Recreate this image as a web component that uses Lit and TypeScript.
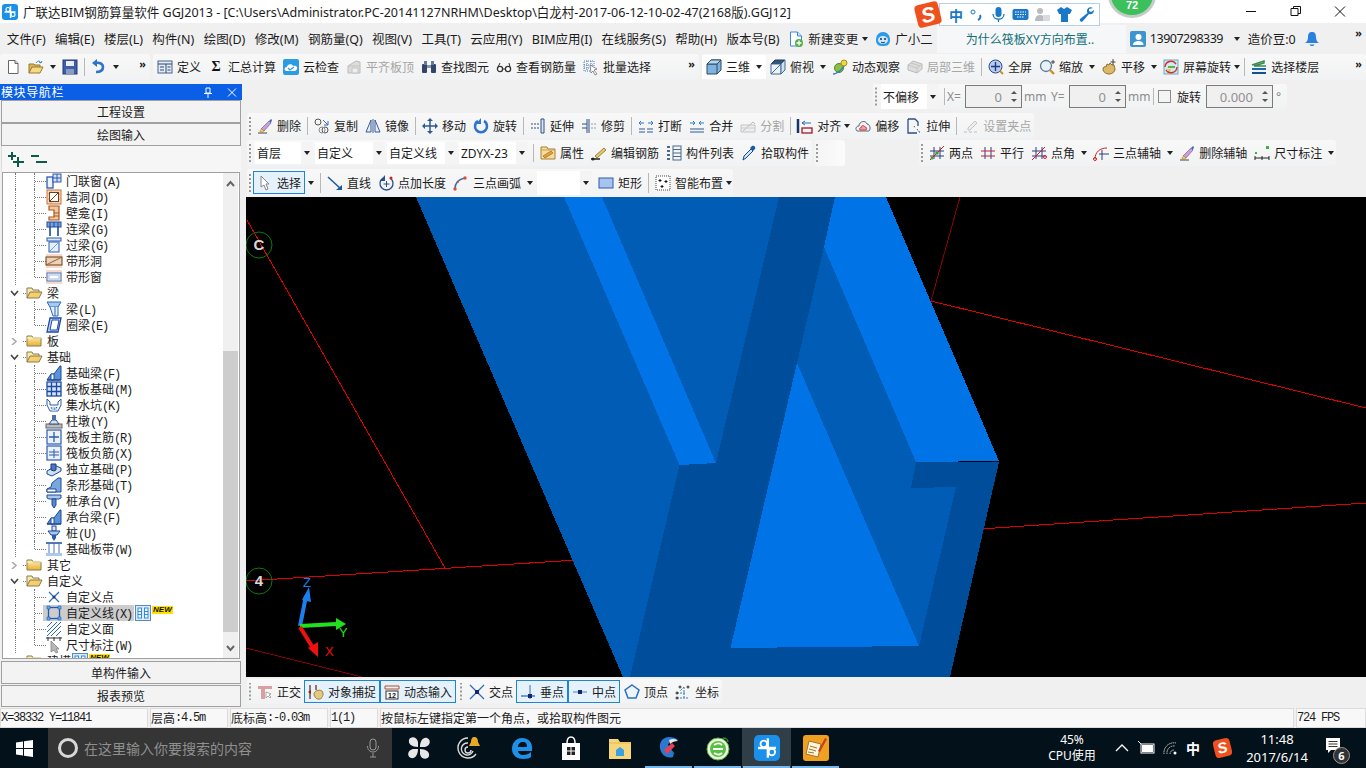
import { LitElement, html, css, svg, TemplateResult } from "lit";
import { customElement } from "lit/decorators.js";

const brush = svg`<path d="M1 15h9" stroke="#444"/><path d="M4 11l8-8 2 2-7 8z" fill="#c9a0d8" stroke="#6a4a8a" stroke-width=".6"/><path d="M3 14c0-2 1-3 2-3l2 2c-1 1-2 1-4 1z" fill="#f2d060" stroke="#a07020" stroke-width=".5"/><path d="M12 3l2-2 1 1-1 3z" fill="#3a6fb8"/>`;
const hash = svg`<path d="M5 2v12M11 2v12M1 6h14M1 11h14" stroke="#2c3f80" fill="none"/>`;
const wall = svg`<rect x="1" y="1" width="14" height="14" fill="#f6d7bd" stroke="#c8703a"/><path d="M1 5h14M1 10h14M5 1v4M11 5v5M5 10v5" stroke="#e8a070" fill="none"/>`;

const ICONS: Record<string, TemplateResult> = {
  new: svg`<path d="M3.500 1.500h6.500l3 3v10h-9.500z" fill="#fff" stroke="#666"/><path d="M10 1.500v3h3" fill="#ddd" stroke="#666"/>`,
  open: svg`<path d="M1 14V5h5l1 1h5v2" fill="#d9b45a" stroke="#9a7a2a"/><path d="M1 14l3-6h11l-3 6z" fill="#f6d887" stroke="#9a7a2a"/><path d="M8 4c2-3 4-2 5 0M13 4l1-2M13 4l-2-1" fill="none" stroke="#3a7fc8"/>`,
  save: svg`<rect x="1" y="1" width="14" height="14" fill="#3d5ea8" stroke="#223a78"/><rect x="4" y="2" width="8" height="5" fill="#e8eef8"/><rect x="4" y="10" width="8" height="5" fill="#8a9ac0"/>`,
  undo: svg`<path d="M5 13c5 0 7-2 7-5s-3-5-8-4" fill="none" stroke="#2f74cc" stroke-width="2.600"/><path d="M6 0v8L1 4z" fill="#2f74cc"/>`,
  define: svg`<rect x="1" y="2" width="14" height="12" fill="#e4ecf6" stroke="#44648c"/><path d="M1 5h14M9 5v9M3 8h4M3 11h4M10.500 8h3M10.500 11h3" stroke="#2c4a70" fill="none"/>`,
  cloud: svg`<rect x="0" y="0" width="16" height="16" rx="2" fill="#2c9be4"/><path d="M3 12c-2-1-2-4 1-4 0-3 5-4 6-1 3-1 5 1 4 3-1 2-2 2-3 2z" fill="#fff"/><path d="M5 9l2 2 4-3" fill="none" stroke="#2c9be4" stroke-width="1.300"/>`,
  flat: svg`<path d="M2 7l8-5 4 1v11H2z" fill="#ddd" stroke="#bbb"/><path d="M2 7h12M6 9h6v5H6z" fill="#eee" stroke="#c4c4c4"/>`,
  find: svg`<rect x="1" y="5" width="5" height="9" rx="1" fill="#33466a"/><rect x="10" y="5" width="5" height="9" rx="1" fill="#33466a"/><rect x="3" y="2" width="3" height="4" fill="#6a7a9a"/><rect x="10" y="2" width="3" height="4" fill="#6a7a9a"/><rect x="6" y="6" width="4" height="3" fill="#8898b4"/>`,
  glasses: svg`<circle cx="4" cy="10" r="2.600" fill="#fff" stroke="#333" stroke-width="1.300"/><circle cx="12" cy="10" r="2.600" fill="#fff" stroke="#333" stroke-width="1.300"/><path d="M6.500 10h3M2 8l2-4M14 8l-1-4" stroke="#333" fill="none"/>`,
  batch: svg`<path d="M1 2h10v10H1zM1 6h10M1 9h10M4 2v10M8 2v10" fill="none" stroke="#4a78b8" stroke-dasharray="1 1"/><path d="M7 6l7 4-3 1 3 4-2 1-2-4-2 2z" fill="#fff" stroke="#666" stroke-width=".7"/>`,
  cube: svg`<path d="M1 5l4-4h10v10l-4 4H1z" fill="#7fb2dc" stroke="#2a4a6a"/><path d="M1 5h10v10M11 5l4-4" fill="none" stroke="#2a4a6a"/><path d="M1 5l4-4h10l-4 4z" fill="#b8d6ee" stroke="#2a4a6a"/>`,
  top: svg`<path d="M1 5l4-4h10l-4 4z" fill="#30557e" stroke="#223a58"/><path d="M1 5h10v10H1z" fill="#eaf2fa" stroke="#44688e"/><path d="M11 5l4-4v10l-4 4zM1 15l10-10" fill="#cfe0f0" stroke="#44688e"/>`,
  orbit: svg`<circle cx="7" cy="9" r="4.500" fill="#8ac040" stroke="#4a8a20"/><path d="M1 15c4 0 10-5 13-11" fill="none" stroke="#3a7ac8" stroke-width="1.400"/><circle cx="12" cy="4" r="3" fill="#f0d840" stroke="#a89020"/>`,
  local3d: svg`<path d="M1 6l5-4 9 3v5l-5 4-9-3z" fill="#ddd" stroke="#bbb"/><path d="M1 6l9 3 5-4M10 9v5M4 4l9 3" fill="none" stroke="#c4c4c4"/>`,
  full: svg`<circle cx="7.500" cy="7.500" r="6.500" fill="#b8cdec" stroke="#2c4a88"/><path d="M7.500 3v9M3 7.500h9" stroke="#1c3a88" stroke-width="1.400"/><path d="M12 12l3 3" stroke="#c89030" stroke-width="2"/>`,
  zoom: svg`<circle cx="7" cy="7" r="5.500" fill="#e8f0f8" stroke="#5a7a9a" stroke-width="1.300"/><path d="M11 11l4 4" stroke="#c89030" stroke-width="2.400"/><path d="M14 1v4M12 3h4" stroke="#444"/>`,
  pan: svg`<path d="M2 10c0-2 2-3 3-2l1-3 2 1 1-2 2 2 2 0 1 4c0 3-3 5-6 5-3 0-6-2-6-5z" fill="#dcb868" stroke="#90702a"/><path d="M12 0v6M9.500 3h5" stroke="#444"/>`,
  spin: svg`<rect x="1" y="1" width="14" height="14" fill="#cfe8f6" stroke="#6aa8d0"/><path d="M2 8a6 6 0 0 1 11-3M14 8a6 6 0 0 1-11 3" fill="none" stroke="#d83020" stroke-width="1.400"/><rect x="5" y="7" width="7" height="2" fill="#68b040"/><rect x="4" y="10" width="4" height="2" fill="#f0c840"/>`,
  floors: svg`<path d="M1 6l12-4v2L3 7h12" fill="none" stroke="#3a8a50" stroke-width="1.500"/><path d="M1 10h14" stroke="#1a6ab0" stroke-width="2"/><path d="M1 14h14" stroke="#14508a" stroke-width="2"/>`,
  change: svg`<path d="M2.500 1h7l4 4v10h-11z" fill="#fff" stroke="#3a8adc"/><path d="M9.500 1v4h4" fill="#cfe4f8" stroke="#3a8adc"/><circle cx="11" cy="12" r="4" fill="#50b040"/><path d="M11 9.500v5M8.500 12h5" stroke="#fff" stroke-width="1.400"/>`,
  xiaoer: svg`<path d="M1 9c0-5 3-8 7-8s7 3 7 8-3 6-7 6-7-1-7-6z" fill="#2c9ae8"/><ellipse cx="8" cy="9" rx="5" ry="4" fill="#cdeafa"/><circle cx="6" cy="8" r="1" fill="#134"/><circle cx="10" cy="8" r="1" fill="#134"/><path d="M6 11c1 1 3 1 4 0" stroke="#134" fill="none"/>`,
  avatar: svg`<rect width="16" height="16" rx="2" fill="#3c95d0"/><circle cx="8.500" cy="6" r="3" fill="#fff"/><path d="M3 14c0-3 3-4 5.500-4s5 1 5 4z" fill="#fff"/>`,
  bell: svg`<path d="M8 1c3 0 4 2 4 5s1 5 3 6H1c2-1 3-3 3-6s1-5 4-5z" fill="#2a80e0"/><path d="M5.500 13.500c1 2 4 2 5 0z" fill="#2a80e0"/>`,
  del: brush,
  copy: svg`<circle cx="4" cy="4" r="3" fill="none" stroke="#555"/><circle cx="11" cy="12" r="3" fill="none" stroke="#555"/><circle cx="8" cy="12" r="3" fill="none" stroke="#888"/><path d="M9 2l5 5M14 3v4h-4" fill="none" stroke="#3a6ab0"/>`,
  mirror: svg`<path d="M6 2v12H1zM10 2v12h5z" fill="#e4eefa" stroke="#3a5a98"/><path d="M8 1v14" stroke="#3a5a98"/>`,
  move: svg`<path d="M8 1v14M1 8h14" stroke="#2c5a94" stroke-width="1.500"/><path d="M8 0l3 3H5zM8 16l3-3H5zM0 8l3-3v6zM16 8l-3-3v6z" fill="#2c5a94"/>`,
  rotate: svg`<path d="M5 3a6 6 0 1 0 6 0" fill="none" stroke="#2f74cc" stroke-width="2.600"/><path d="M8 0v6H3z" fill="#2f74cc"/>`,
  extend: svg`<path d="M1 6h8M1 10h8" stroke="#2c4f8a" stroke-dasharray="2 1"/><path d="M11 1h3v14h-3z" fill="#dbe6f3" stroke="#2c4f8a"/>`,
  trim: svg`<path d="M1 6h5M1 10h5" stroke="#2c4f8a"/><path d="M6 1v14M8 1v14" stroke="#2c4f8a"/><path d="M10 6h5M10 10h5" stroke="#8aa0c0" stroke-dasharray="2 1"/>`,
  brk: svg`<path d="M1 11h6M9 11h6M1 14h6M9 14h6" stroke="#2c5a94"/><path d="M6 5H1M1 5l2-2M1 5l2 2M10 5h5M15 5l-2-2M15 5l-2 2" fill="none" stroke="#2c7ac4"/>`,
  merge: svg`<path d="M1 11h14M1 14h14" stroke="#2c5a94"/><path d="M1 5h5M6 5L4 3M6 5L4 7M15 5h-5M10 5l2-2M10 5l2 2" fill="none" stroke="#2c7ac4"/>`,
  split: svg`<path d="M1 14V7h14v7z" fill="#eee" stroke="#c4c4c4"/><path d="M3 13l10-9 2 2" fill="none" stroke="#bbb"/><path d="M1 10h14" stroke="#ccc"/>`,
  align: svg`<path d="M1 1v14" stroke="#14346a" stroke-width="2.500"/><rect x="5" y="10" width="10" height="5" fill="none" stroke="#a01828" stroke-width="1.300"/><path d="M5 5h9M5 5l3-2M5 5l3 2" fill="none" stroke="#2a6ac0"/>`,
  offset: svg`<path d="M2 13c-2-2-1-5 2-5 0-5 7-6 8-2 3 0 4 5 2 7z" fill="#f4f4f4" stroke="#4a6a8a"/><path d="M5 12c-1-1 0-3 1-2 0-3 3-3 4-1 2 0 2 2 1 3z" fill="#f0a0a0" stroke="#d84040"/>`,
  stretch: svg`<path d="M2 1h7l3 3v4M2 1v14h9" fill="none" stroke="#2c4f8a" stroke-width="1.300"/><path d="M8 8l1 2M11 11l2 3M13 14h2" stroke="#444" stroke-dasharray="1 1"/>`,
  grip: svg`<path d="M1 14h3M6 14h3M11 14h3" stroke="#bbb"/><path d="M5 10l7-7 2 2-7 7H5z" fill="#eee" stroke="#c4c4c4"/>`,
  attr: svg`<path d="M1 14V2h6l1 2h7v10z" fill="#f6dca0" stroke="#a88030"/><path d="M3 11l8-5 2 2-8 5z" fill="#e8a030" stroke="#8a6020" stroke-width=".6"/><path d="M1 5h14" stroke="#c8a050"/>`,
  edit: svg`<path d="M0 14h9" stroke="#222" stroke-width="1.500"/><path d="M4 11l9-8 2 2-9 8z" fill="#e8c860" stroke="#7a5a20" stroke-width=".7"/><circle cx="2" cy="14" r="1.500" fill="#222"/>`,
  list: svg`<path d="M1 2h3M1 6h3M1 10h3M1 14h3" stroke="#4a6a8a" stroke-width="2"/><rect x="7" y="1" width="8" height="14" fill="#f0f4f8" stroke="#4a6a8a"/><path d="M7 4.500h8M7 8h8M7 11.500h8" stroke="#4a6a8a"/>`,
  pick: svg`<path d="M2 15l1-4 7-7 2 2-7 7z" fill="#cfe4f8" stroke="#1c4a88"/><path d="M9 3l2-2c2-1 4 1 3 3l-2 2z" fill="#1c5aa8"/>`,
  twopt: svg`${hash}<path d="M1 15L15 1" stroke="#d02020"/><circle cx="8" cy="8" r="1.800" fill="#4a9a30"/><circle cx="3" cy="13" r="1.500" fill="#4a9a30"/>`,
  para: svg`<path d="M5 2v12M11 2v12" stroke="#2c3f80"/><path d="M1 6h14M1 11h14" stroke="#c02030"/>`,
  angle: svg`${hash}<path d="M1 15L14 2" stroke="#d02020"/><circle cx="14" cy="12" r="1.500" fill="none" stroke="#d02020"/>`,
  arc3: svg`<path d="M2 14c0-7 5-11 12-11" fill="none" stroke="#d02020"/><circle cx="2" cy="14" r="1.500" fill="none" stroke="#d02020"/><path d="M9 5v10M6 9h10" stroke="#2c3f80"/>`,
  dim: svg`<rect x="12" y="1" width="3" height="3" fill="#40b040"/><rect x="1" y="7" width="2" height="2" fill="#40b040"/><path d="M1 13h14M1 11v4M8 11v4M15 11v4" stroke="#222"/>`,
  cursor: svg`<path d="M4 1v11l3-2 2 5 2-1-2-5h3z" fill="#fff" stroke="#888"/>`,
  line: svg`<path d="M1 2l13 12" stroke="#1c5a9c" stroke-width="1.500"/><path d="M15 15H9l6-5z" fill="#1c5a9c"/>`,
  pluslen: svg`<path d="M5 3a6.500 6.500 0 1 0 7 0" fill="none" stroke="#2c4f8a" stroke-width="1.300"/><path d="M8.500 6v6M5.500 9h6" stroke="#2c4f8a"/><path d="M7 0v6H2z" fill="#2c4f8a"/><circle cx="13" cy="3" r="1.500" fill="#d02020"/>`,
  arc: svg`<path d="M2 14c0-6 4-10 10-11" fill="none" stroke="#3a6ab0" stroke-width="1.500"/><circle cx="2" cy="14" r="1.700" fill="#d85040"/><circle cx="12" cy="3" r="1.700" fill="#d85040"/><circle cx="5" cy="7" r="1" fill="#d85040"/>`,
  rect: svg`<rect x="1" y="3" width="14" height="10" fill="#a8c4ee" stroke="#2c5aa8"/>`,
  smart: svg`<rect x="1" y="1" width="14" height="14" fill="#fff" stroke="#444" stroke-dasharray="1 1"/><path d="M5 4v3M3.500 5.500h3M11 5v3M9.500 6.500h3M7 10v3M5.500 11.500h3" stroke="#111"/>`,
  ortho: svg`<path d="M1 2h14v3H8v10H4V5H1z" fill="#d8a0a0"/><path d="M9 8v6l2-2 2 2 1-1-2-2 2-1z" fill="#fff" stroke="#777" stroke-width=".6"/>`,
  snap: svg`<path d="M2 1v14M8 1v5" stroke="#6a3020" stroke-width="1.300"/><path d="M0 8l3-2v4zM8 8l3-2v4z" fill="#8a2020"/><path d="M6 10c0-3 5-5 8-3 2 2 1 7-2 8-3 1-6-2-6-5z" fill="#e4c880" stroke="#a08040"/>`,
  dyn: svg`<path d="M1 2h14M1 5h14M1 2v3M15 2v3" stroke="#b05030" fill="none"/><rect x="2" y="7" width="12" height="8" fill="#fff" stroke="#333"/><text x="8" y="14" text-anchor="middle" font-size="7" font-weight="700" fill="#111" font-family="Liberation Sans">12</text>`,
  cross: svg`<path d="M1 1l14 14M15 1L1 15" stroke="#2c6fc0" stroke-width="1.300"/><rect x="6" y="6" width="4" height="4" fill="#14286a"/>`,
  perp: svg`<path d="M1 12h14" stroke="#2c6fc0" stroke-width="1.300"/><path d="M10 1v14" stroke="#2c6fc0"/><rect x="8" y="10" width="4" height="4" fill="#14286a"/>`,
  mid: svg`<path d="M1 8h14" stroke="#7ba4d8" stroke-width="1.500"/><rect x="6" y="6" width="4" height="4" fill="#14286a"/>`,
  vertex: svg`<path d="M8 1l7 5-3 8H4L1 6z" fill="#eef4fc" stroke="#2c6fc0" stroke-width="1.500"/>`,
  coord: svg`<path d="M2 14h12M9 14V3M2 9h9M9 3L5 7" stroke="#3a7ac0" stroke-dasharray="2 1" fill="none"/><circle cx="2" cy="14" r="1" fill="none" stroke="#222"/><circle cx="13" cy="3" r="1" fill="none" stroke="#222"/><circle cx="5" cy="3" r="1" fill="none" stroke="#222"/><circle cx="2" cy="9" r="1" fill="none" stroke="#222"/>`,
  folder: svg`<path d="M1 13V3h5l1 2h8v8z" fill="url(#fg)" stroke="#8a7a50"/><path d="M1 5h14" stroke="#fff3c0"/>`,
  folderOpen: svg`<path d="M1 13V3h5l1 2h6v2" fill="#fbe9b0" stroke="#8a7a50"/><path d="M1 13l3-6h12l-3 6z" fill="#f6cf6c" stroke="#8a7a50"/>`,
  door: svg`<rect x="1" y="4" width="6" height="11" fill="#eaf2fb" stroke="#2c5ab0" stroke-width="1.300"/><rect x="7" y="1" width="8" height="8" fill="#d2e2f6" stroke="#2c5ab0"/><path d="M11 1v8M7 5h8" stroke="#2c5ab0"/>`,
  hole: svg`${wall}<rect x="3.500" y="3.500" width="9" height="9" fill="#fff" stroke="#6a4020"/><path d="M4 12l8-8" stroke="#6a4020"/>`,
  niche: svg`<path d="M3 1h10v14H3v-3h5V5H3z" fill="#f3c8a0" stroke="#a85a20" stroke-width="1.200"/><path d="M8 8h5M8 11h5" stroke="#a85a20"/>`,
  linkb: svg`<rect x="1" y="1" width="14" height="5" fill="#7aa0dc" stroke="#1c4aa0"/><path d="M4 6v9M12 6v9" stroke="#1c4aa0" stroke-width="1.600"/><path d="M4 1v5M8 1v5M12 1v5" stroke="#1c4aa0"/>`,
  lintel: svg`<rect x="1" y="1" width="14" height="3" fill="#dbe8f8" stroke="#2c5ab0"/><rect x="3" y="5" width="10" height="10" fill="#e4eefa" stroke="#2c5ab0"/><path d="M4 14l8-8" stroke="#7aa0dc"/>`,
  bandh: svg`<rect x="0" y="1" width="16" height="14" fill="#f8d8c8"/><rect x="0" y="4" width="16" height="8" fill="#e8d4b8" stroke="#6a3a14"/><path d="M0 12L16 4" stroke="#a85a20"/>`,
  bandw: svg`<rect x="0" y="1" width="16" height="14" fill="#f8d8c8"/><rect x="1" y="4" width="14" height="8" fill="#e8f0fb" stroke="#4a78c0"/><rect x="3" y="6" width="10" height="4" fill="#fff" stroke="#a8c0e4"/>`,
  beam: svg`<path d="M1 1h14l-3 5H4z" fill="#a8ccf0" stroke="#2c6ab8"/><path d="M4 6l3 9h5V6" fill="#e4f0fb" stroke="#2c6ab8"/><path d="M9 6v9" stroke="#2c6ab8"/>`,
  ring: svg`<path d="M4 1h11l-3 14H1z" fill="#c4d8f4" stroke="#1c4aa8" stroke-width="1.300"/><path d="M6 3h7l-2 10H4z" fill="#fff" stroke="#1c4aa8"/>`,
  fbeam: svg`<path d="M1 15l4-6h3l6-8h1v14z" fill="#5a92d8" stroke="#1c4a98"/><path d="M5 15V9h3v6z" fill="#fff" stroke="#1c4a98"/><path d="M1 15h14" stroke="#1c4a98" stroke-width="1.300"/>`,
  raft: svg`<rect x="1" y="1" width="14" height="14" fill="#d4e2f6" stroke="#1c4aa0" stroke-width="1.300"/><path d="M5.500 1v14M10.500 1v14M1 5.500h14M1 10.500h14" stroke="#1c4aa0" stroke-width="1.300"/>`,
  sump: svg`<path d="M1 2l3 3v3h8V5l3-3v6l-3 6H4L1 8z" fill="#fff" stroke="#2c5ab0"/><path d="M4 10h8l-2 4H6z" fill="#b8d0ee"/><path d="M5 11h1M8 12h1M10 10.500h1" stroke="#2c5ab0"/>`,
  pier: svg`<rect x="0" y="11" width="16" height="4" fill="#bcbcbc" stroke="#666"/><path d="M3 11l3-4h4l3 4z" fill="#dce6f2" stroke="#2c4a88"/><rect x="6" y="2" width="4" height="5" fill="#4a72b0"/>`,
  rmain: svg`<rect x="1" y="1" width="14" height="14" fill="#eaf2fb" stroke="#2c5ab0" stroke-width="1.200"/><path d="M8 3v10M3 8h10" stroke="#2c5ab0" stroke-width="1.300"/>`,
  rneg: svg`<rect x="1" y="1" width="14" height="14" fill="#eaf2fb" stroke="#2c5ab0" stroke-width="1.200"/><path d="M3 7h10M3 10h10M8 4v9" stroke="#2c5ab0"/>`,
  iso: svg`<path d="M1 10l9-5 5 2v3l-9 5-5-2z" fill="#cfe0f4" stroke="#1c4a98"/><path d="M5 3h5v6l-2 1-3-1z" fill="#4a78c0" stroke="#1c3a78"/>`,
  strip: svg`<path d="M1 15v-3l4-2 1-4 6-5h3v14z" fill="#7aa8de" stroke="#1c4a98"/><path d="M1 12h9v3H1z" fill="#fff" stroke="#1c4a98"/>`,
  cap: svg`<path d="M1 2h14v3l-2 1H3L1 5z" fill="#a8c8ee" stroke="#1c4a98"/><path d="M6 6h4v6l-2 3-2-3z" fill="#5a88c8" stroke="#1c4a98"/>`,
  pile: svg`<rect x="6" y="1" width="4" height="5" fill="#dce8f8" stroke="#1c4a98"/><path d="M2 6h12l-3 4H5z" fill="#a8c8ee" stroke="#1c4a98"/><path d="M6 10h4v3l-2 3-2-3z" fill="#2c5ab0"/>`,
  fband: svg`<path d="M0 2h16M0 14h16" stroke="#1c4a98" stroke-width="1.600"/><path d="M3 2v12M8 2v12M13 2v12" stroke="#4a78c0"/><rect x="0" y="12" width="16" height="3" fill="#a8c8ee"/>`,
  xpt: svg`<path d="M3 3l10 10M13 3L3 13" stroke="#2c6ab8" stroke-width="1.200"/><circle cx="8" cy="8" r="1.500" fill="#1c3a78"/>`,
  lbox: svg`<rect x="2.500" y="2.500" width="11" height="11" fill="none" stroke="#1c5ab8" stroke-width="1.300"/><path d="M1 1h3v3H1zM12 1h3v3h-3zM1 12h3v3H1zM12 12h3v3h-3z" fill="#6aa8ec" stroke="#1c5ab8" stroke-width=".6"/>`,
  hatch: svg`<path d="M1 6l5-5M1 11L11 1M1 15L15 1M5 15L15 5M10 15l5-5" stroke="#2c6ab8"/>`,
  dimc: svg`<path d="M0 1h16M2 0v4M14 0v4M8 0v4" stroke="#333"/><path d="M5 4v11l3-2 2 3 2-1-2-3h3z" fill="#b8b8b8" stroke="#777" stroke-width=".7"/>`,
  bars: svg`<rect x="0.500" y="0.500" width="15" height="15" fill="#dcecfc" stroke="#5a88b8"/><rect x="3" y="3" width="3.500" height="10" fill="#fff" stroke="#2c8ae0"/><rect x="9.500" y="3" width="3.500" height="10" fill="#fff" stroke="#2c8ae0"/><path d="M3 6.500h3.500M3 9.500h3.500M9.500 6.500H13M9.500 9.500H13" stroke="#2c8ae0"/>`,
  app: svg`<rect width="16" height="16" rx="3" fill="#1a90ea"/><path d="M8.500 2v12M2.500 8h11" stroke="#fff" stroke-width="1.400"/><circle cx="6" cy="5.500" r="2" fill="none" stroke="#fff" stroke-width="1.100"/><circle cx="11" cy="10.500" r="2" fill="none" stroke="#fff" stroke-width="1.100"/>`,
};

type Item = { i?: string; t?: string; a?: boolean; tight?: boolean; dis?: boolean; on?: boolean; wh?: boolean; sep?: boolean; grip?: boolean; combo?: number; sym?: string };

const S: Item = { sep: true };
const G: Item = { grip: true };

const ROW_A: Item[] = [{ i: "new" }, { i: "open", a: true }, { i: "save" }, S, { i: "undo", a: true }];
const ROW_B: Item[] = [
  { i: "define", t: "定义" }, { sym: "Σ", t: "汇总计算" }, { i: "cloud", t: "云检查" }, { i: "flat", t: "平齐板顶", dis: true },
  { i: "find", t: "查找图元" }, { i: "glasses", t: "查看钢筋量" }, { i: "batch", t: "批量选择" },
];
const ROW_C: Item[] = [
  { i: "cube", t: "三维", a: true, wh: true }, { i: "top", t: "俯视", a: true }, { i: "orbit", t: "动态观察" }, { i: "local3d", t: "局部三维", dis: true }, S,
  { i: "full", t: "全屏" }, { i: "zoom", t: "缩放", a: true }, { i: "pan", t: "平移", a: true }, { i: "spin", t: "屏幕旋转", a: true, tight: true }, S, { i: "floors", t: "选择楼层" },
];
const ROW_EDIT: Item[] = [
  G, { i: "del", t: "删除" }, S, { i: "copy", t: "复制" }, { i: "mirror", t: "镜像" }, S, { i: "move", t: "移动" }, { i: "rotate", t: "旋转" }, S,
  { i: "extend", t: "延伸" }, { i: "trim", t: "修剪" }, S, { i: "brk", t: "打断" }, { i: "merge", t: "合并" }, { i: "split", t: "分割", dis: true }, S,
  { i: "align", t: "对齐", a: true, tight: true }, { i: "offset", t: "偏移" }, { i: "stretch", t: "拉伸" }, S, { i: "grip", t: "设置夹点", dis: true },
];
const ROW_COMP: Item[] = [
  G, { combo: 58, t: "首层" }, { combo: 70, t: "自定义" }, { combo: 70, t: "自定义线" }, { combo: 69, t: "ZDYX-23" }, S,
  { i: "attr", t: "属性" }, { i: "edit", t: "编辑钢筋" }, { i: "list", t: "构件列表" }, { i: "pick", t: "拾取构件" },
];
const ROW_AUX: Item[] = [
  G, { i: "twopt", t: "两点" }, { i: "para", t: "平行" }, { i: "angle", t: "点角", a: true }, { i: "arc3", t: "三点辅轴", a: true }, { i: "del", t: "删除辅轴" }, { i: "dim", t: "尺寸标注", a: true },
];
const ROW_DRAW: Item[] = [
  G, { i: "cursor", t: "选择", on: true }, { a: true }, S, { i: "line", t: "直线" }, { i: "pluslen", t: "点加长度" }, { i: "arc", t: "三点画弧", a: true },
  { combo: 55, t: "" }, { i: "rect", t: "矩形" }, S, { i: "smart", t: "智能布置", a: true, tight: true },
];
const ROW_SNAP: Item[] = [
  G, { i: "ortho", t: "正交" }, { i: "snap", t: "对象捕捉", on: true }, { i: "dyn", t: "动态输入", on: true }, G,
  { i: "cross", t: "交点" }, { i: "perp", t: "垂点", on: true }, { i: "mid", t: "中点", on: true }, { i: "vertex", t: "顶点" }, { i: "coord", t: "坐标" },
];

type Node = { l: 1 | 2; t: string; code?: string; i?: string; open?: boolean; last?: boolean; sel?: boolean; badge?: boolean };

const TREE: Node[] = [
  { l: 2, t: "门联窗", code: "A", i: "door" }, { l: 2, t: "墙洞", code: "D", i: "hole" }, { l: 2, t: "壁龛", code: "I", i: "niche" },
  { l: 2, t: "连梁", code: "G", i: "linkb" }, { l: 2, t: "过梁", code: "G", i: "lintel" }, { l: 2, t: "带形洞", i: "bandh" }, { l: 2, t: "带形窗", i: "bandw", last: true },
  { l: 1, t: "梁", open: true }, { l: 2, t: "梁", code: "L", i: "beam" }, { l: 2, t: "圈梁", code: "E", i: "ring", last: true },
  { l: 1, t: "板" }, { l: 1, t: "基础", open: true },
  { l: 2, t: "基础梁", code: "F", i: "fbeam" }, { l: 2, t: "筏板基础", code: "M", i: "raft" }, { l: 2, t: "集水坑", code: "K", i: "sump" }, { l: 2, t: "柱墩", code: "Y", i: "pier" },
  { l: 2, t: "筏板主筋", code: "R", i: "rmain" }, { l: 2, t: "筏板负筋", code: "X", i: "rneg" }, { l: 2, t: "独立基础", code: "P", i: "iso" }, { l: 2, t: "条形基础", code: "T", i: "strip" },
  { l: 2, t: "桩承台", code: "V", i: "cap" }, { l: 2, t: "承台梁", code: "F", i: "fbeam" }, { l: 2, t: "桩", code: "U", i: "pile" }, { l: 2, t: "基础板带", code: "W", i: "fband", last: true },
  { l: 1, t: "其它" }, { l: 1, t: "自定义", open: true },
  { l: 2, t: "自定义点", i: "xpt" }, { l: 2, t: "自定义线", code: "X", i: "lbox", sel: true, badge: true }, { l: 2, t: "自定义面", i: "hatch" }, { l: 2, t: "尺寸标注", code: "W", i: "dimc", last: true },
  { l: 1, t: "建模", badge: true },
];

const icon = (name: string) => html`<svg class="ic" viewBox="0 0 16 16">${ICONS[name]}</svg>`;

@customElement("app-root")
export class AppRoot extends LitElement {
  static styles = css`
    :host {
      display: block;
      width: 1366px;
      height: 768px;
      font-family: "Noto Sans", "Noto Sans CJK SC", sans-serif;
      font-size: 12px;
      color: #1c1c1c;
    }
    .app {
      position: relative;
      width: 1366px;
      height: 768px;
      overflow: hidden;
      background: #f0f0f0;
      display: flex;
      flex-direction: column;
    }
    .ic { width: 16px; height: 16px; flex: none; overflow: visible; }
    .titlebar { height: 23px; background: #fff; display: flex; align-items: center; flex: none; font-size: 12.53px; padding-left: 2px; gap: 5px; white-space: nowrap; }
    .winbtns { margin-left: auto; display: flex; padding-right: 3px; }
    .winbtns svg { width: 45px; height: 21px; }
    .menubar { height: 31px; flex: none; display: flex; align-items: center; padding-left: 2px; white-space: nowrap; font-size: 12.5px; }
    .menu { padding: 0 4.7px; }
    .menu.ico { display: flex; align-items: center; gap: 4px; padding: 0 4px; }
    .menu.ico .arrow { margin-left: 0; }
    .menu.ico .phone-arrow { margin-left: 7px; }
    .ticker { width: 189px; height: 28px; background: #f6f7f8; color: #12707a; display: flex; align-items: center; padding-left: 29px; box-sizing: border-box; flex: none; font-size: 12px; }
    .phone { letter-spacing: -.5px; }
    .more { font-size: 11px; font-weight: 700; line-height: 10px; align-self: flex-start; margin-top: 5px; }
    .menu-more { margin-left: auto; margin-right: 4px; }
    .row1 { height: 26px; flex: none; display: flex; gap: 3px; }
    .bar { display: flex; align-items: stretch; background: linear-gradient(#f8f8f8, #f1f2f3); border-radius: 3px; white-space: nowrap; flex: none; }
    .row1 .bar { height: 26px; }
    .w150 { width: 150px; padding-left: 1px; box-sizing: border-box; }
    .w546 { width: 546px; }
    .grow { flex: 1; }
    .bar .more { margin-left: auto; margin-right: 4px; }
    .it { display: flex; align-items: center; padding: 0 3px 0 4px; gap: 4px; flex: none; }
    .it.dis { color: #a6a6a6; }
    .it.on { border: 1px solid #1e84d8; background: #e5f1fb; padding: 0 3px; margin: 1px 0; }
    .it.wh { background: #fff; margin: 1px 0; }
    .sym { width: 16px; text-align: center; font-weight: 700; font-size: 14px; color: #111; font-family: "Liberation Serif", serif; }
    .arrow { width: 0; height: 0; border: 3.5px solid transparent; border-top: 4px solid #222; border-bottom: 0; margin-left: 2px; margin-right: -1px; flex: none; }
    .it.wh .arrow { margin-right: 1px; }
    .it.tight .arrow { margin-left: -1px; margin-right: -2px; }
    .bare { width: 12px; display: flex; align-items: center; justify-content: center; flex: none; }
    .bare .arrow { margin: 0; }
    .sep { width: 6px; flex: none; display: flex; justify-content: flex-end; padding-right: 2px; box-sizing: border-box; }
    .sep i { display: block; width: 1px; background: #b8b8b8; margin: 4px 0; }
    .grip { width: 6px; flex: none; background: radial-gradient(circle, #9a9a9a 1px, transparent 1.2px) center / 4px 4px repeat-y; margin: 4px 0; }
    .on + .grip { width: 9px; }
    .combo { background: #fff; display: flex; align-items: center; padding-left: 2px; margin: 2px 2px 2px 0; box-sizing: border-box; justify-content: space-between; flex: none; }
    .combo b { font-weight: 400; }
    .combo u { width: 12px; align-self: stretch; background: #f4f4f4; display: flex; align-items: center; justify-content: center; text-decoration: none; }
    .combo .arrow { margin: 0; }
    .first-combo { margin-left: 2px; }
    .blank { margin-left: 2px; }
    .work { flex: 1; display: flex; min-height: 0; }
    .nav { width: 242px; flex: none; padding-top: 4px; display: flex; flex-direction: column; box-sizing: border-box; font-family: "Liberation Mono", "Noto Sans CJK SC", monospace; }
    .navhead { height: 16px; background: #0a5fe6; color: #fff; display: flex; align-items: center; letter-spacing: .6px; padding-left: 1px; flex: none; }
    .navhead svg { width: 10px; height: 11px; }
    .navhead .pin { margin-left: auto; margin-right: 14px; }
    .navhead .x { margin-right: 5px; }
    .navbtn { margin: 0 1px; box-sizing: border-box; border: 1px solid #a0a0a0; background: #f3f3f3; display: flex; align-items: center; justify-content: center; flex: none; height: 23px; }
    .nav .gapbtn { margin-top: 1px; height: 22px; }
    .tallgap { margin-top: 2px; }
    .treebar { height: 26px; margin: 0 1px; background: #f6f6f6; display: flex; align-items: center; gap: 7px; padding-left: 6px; flex: none; border-left: 1px solid #ddd; }
    .treebox { margin: 0 2px; height: 487px; flex: none; box-sizing: border-box; border: 1px solid #a0a0a0; display: flex; background: #fff; }
    .rows { flex: 1; overflow: hidden; min-width: 0; }
    .row { height: 16px; display: flex; align-items: center; white-space: nowrap; }
    .m { font-size: 12px; letter-spacing: -1.2px; font-family: "Liberation Mono", monospace; }
    .c1 { width: 12px; height: 16px; border-right: 1px dotted #777; flex: none; }
    .c2 { width: 18px; height: 16px; border-right: 1px dotted #777; flex: none; align-self: flex-start; }
    .c2.end { height: 8px; }
    .c3 { width: 11px; border-top: 1px dotted #777; flex: none; }
    .node { display: flex; align-items: center; gap: 4px; height: 16px; }
    .node.sel { background: #cccccc; padding: 0 2px 0 3px; margin-left: -3px; }
    .exp { width: 20px; display: flex; justify-content: center; flex: none; padding-left: 2px; box-sizing: border-box; }
    .exp svg { width: 9px; height: 7px; }
    .stub { width: 3px; border-top: 1px dotted #777; flex: none; }
    .lv1 { margin-left: 5px; }
    .badge { display: flex; align-items: center; margin-left: 1px; gap: 1px; }
    .new { font: italic 700 8px/8px "Liberation Sans", sans-serif; background: #ffe000; color: #111; padding: 0 1px; margin-top: -7px; }
    .sb { width: 15px; margin-right: 1px; background: #f0f0f0; display: flex; flex-direction: column; flex: none; }
    .sb svg { width: 15px; height: 12px; flex: none; }
    .sb .top { height: 178px; flex: none; display: flex; }
    .sb .thumb { height: 281px; background: #cdcdcd; flex: none; }
    .sb .bot { flex: 1; display: flex; align-items: flex-end; padding-bottom: 4px; }
    .sb .top svg { margin-top: 5px; }
    .main { flex: 1; display: flex; flex-direction: column; min-width: 0; }
    .cmdrow { display: flex; flex: none; padding-left: 5px; }
    .offs { height: 25px; margin: 4px 0 4px 631px; padding-right: 6px; align-self: flex-start; align-items: center; }
    .offs .grip { margin: 2px 0; align-self: stretch; }
    .offs .combo { width: 58px; height: 25px; margin: 0 2px; }
    .offs .sep { height: 25px; align-self: stretch; }
    .gray { color: #8c8c8c; }
    .w18 { width: 18px; flex: none; }
    .w29 { width: 27px; padding-left: 2px; flex: none; color: #8c8c8c; }
    .w24 { width: 22px; }
    .spin { height: 23px; box-sizing: border-box; border: 1px solid #7a7a7a; background: #f0f0f0; display: flex; align-items: center; justify-content: flex-end; color: #909090; font-size: 13px; flex: none; }
    .spin em { width: 14px; margin-left: 5px; height: 100%; display: flex; flex-direction: column; justify-content: center; gap: 5px; align-items: center; }
    .spin em::before, .spin em::after { content: ""; border: 3px solid transparent; }
    .spin em::before { border-bottom: 3px solid #555; border-top: 0; }
    .spin em::after { border-top: 3px solid #555; border-bottom: 0; }
    .w57 { width: 57px; }
    .w67 { width: 67px; }
    .cb { width: 11px; height: 11px; border: 1px solid #8a8a8a; background: #f4f4f4; margin: 0 6px 0 2px; flex: none; }
    .rot { width: 29px; flex: none; }
    .deg { margin-left: 3px; }
    .r2 { height: 26px; }
    .r3 { height: 26px; margin-top: 1px; gap: 2px; }
    .r3 .far { margin-left: 72px; }
    .fade { width: 31px; background: linear-gradient(90deg, #f4f4f4, #fbfbfb); }
    .r4 { height: 28px; margin-top: 3px; }
    .r4 .bar { height: 28px; }
    .r4 .it.on { margin: 2px 0 3px; }
    .canvas { display: block; width: 1120px; height: 480px; margin-left: 4px; flex: none; background: #000; }
    .snaprow { height: 25px; margin-top: 2px; padding-left: 5px; display: flex; flex: none; }
    .status { height: 20px; flex: none; display: flex; background: #f0f0f0; gap: 2px; white-space: nowrap; font-family: "Liberation Mono", "Noto Sans CJK SC", monospace; }
    .cell { background: #f8f8f8; border: 1px solid #dcdcdc; box-sizing: border-box; height: 20px; display: flex; align-items: center; flex: none; }
    .cell.grow { flex: 1; }
    .taskbar { height: 40px; flex: none; background: #03111a; display: flex; color: #fff; white-space: nowrap; }
    .start { width: 48px; display: flex; align-items: center; justify-content: center; flex: none; }
    .start svg { width: 17px; height: 17px; }
    .search { width: 344px; margin-right: 2px; background: #353535; display: flex; align-items: center; padding-left: 10px; box-sizing: border-box; color: #8f8f8f; font-size: 14px; flex: none; gap: 6px; }
    .search .ring { width: 20px; height: 20px; box-sizing: border-box; border: 3px solid #d8d8d8; border-radius: 50%; flex: none; }
    .search svg { margin-left: auto; margin-right: 12px; width: 14px; height: 20px; }
    .tk { width: 49px; flex: none; display: flex; align-items: center; justify-content: center; position: relative; }
    .tk svg { width: 26px; height: 26px; }
    .tk.run::after { content: ""; position: absolute; left: 1px; right: 1px; bottom: 0; height: 2px; background: #76b9ed; }
    .tk.act { background: #2f3e47; }
    .gap5 { margin-left: 5px; }
    .tray { margin-left: auto; display: flex; align-items: center; }
    .cpu { width: 60px; text-align: center; line-height: 16px; }
    .tr { display: flex; align-items: center; justify-content: center; flex: none; }
    .tr svg { width: 18px; height: 16px; }
    .tr.w24t { width: 24px; }
    .tr.lead { margin-left: 8px; }
    .tr.w25t { width: 25px; }
    .tr.zh { width: 20px; font-size: 14px; font-weight: 700; }
    .tr.w38t { width: 38px; }
    .clock { width: 72px; text-align: center; font-size: 13px; line-height: 18px; }
    .notif { width: 53px; height: 40px; position: relative; }
    .notif svg { position: absolute; left: 12px; top: 10px; }
    .notif b { position: absolute; left: 20px; top: 19px; width: 17px; height: 17px; border-radius: 50%; background: #333; border: 1px solid #999; box-sizing: border-box; font-size: 11px; line-height: 15px; text-align: center; }
    .slogo { background: #f0501e; color: #fff; font: italic 700 17px/20px "Liberation Sans", sans-serif; text-align: center; transform: rotate(-14deg); border-radius: 4px; flex: none; }
    .slogo.tray-s { width: 17px; height: 18px; font-size: 15px; line-height: 18px; }
    .ime { position: absolute; left: 916px; top: 3px; display: flex; align-items: center; }
    .ime .slogo { width: 24px; height: 23px; font-size: 21px; line-height: 23px; z-index: 1; }
    .imebar { margin-left: -1px; width: 161px; height: 23px; box-sizing: border-box; border: 1px solid #b8d0e6; background: #fff; display: flex; align-items: center; gap: 5px; padding-left: 9px; color: #1a78c8; font-weight: 700; font-size: 14px; }
    .imebar svg { width: 17px; height: 17px; }
    .orb { position: absolute; left: 1108px; top: -28px; width: 48px; height: 46px; border-radius: 50%; box-sizing: border-box; border: 3px solid #c4ccc8; background: #3cc05c; color: #fff; font: 700 11px/12px "Liberation Sans", sans-serif; display: flex; align-items: flex-end; justify-content: center; padding-bottom: 4px; }
  `;

  private renderItem(it: Item, idx: number) {
    if (it.sep) return html`<div class="sep"><i></i></div>`;
    if (it.grip) return html`<div class="grip"></div>`;
    if (it.combo) {
      const cls = `combo ${idx === 1 ? "first-combo" : ""} ${it.t === "" ? "blank" : ""}`;
      return html`<div class=${cls} style="width:${it.combo}px"><b>${it.t}</b><u><span class="arrow"></span></u></div>`;
    }
    if (!it.i && !it.sym) return html`<div class="bare"><span class="arrow"></span></div>`;
    const cls = ["it", it.dis ? "dis" : "", it.on ? "on" : "", it.wh ? "wh" : "", it.tight ? "tight" : ""].join(" ");
    return html`<div class=${cls}>
      ${it.sym ? html`<span class="sym">${it.sym}</span>` : icon(it.i!)}
      ${it.t ? html`<span>${it.t}</span>` : ""}
      ${it.a ? html`<span class="arrow"></span>` : ""}
    </div>`;
  }

  private items(list: Item[]) {
    return list.map((it, i) => this.renderItem(it, i));
  }

  private renderNode(n: Node) {
    const label = html`${n.t}${n.code ? html`<span class="m">(${n.code})</span>` : ""}`;
    const badge = n.badge ? html`<span class="badge">${icon("bars")}<span class="new">NEW</span></span>` : "";
    if (n.l === 1) {
      return html`<div class="row">
        <span class="exp">
          <svg viewBox="0 0 9 7">
            <path d=${n.open ? "M1 1l3.500 4L8 1" : "M2 0l4 3.500L2 7"} fill="none" stroke=${n.open ? "#444" : "#aaa"} stroke-width="1.600"></path>
          </svg>
        </span>
        <span class="stub"></span>
        ${icon(n.open ? "folderOpen" : "folder")}
        <span class="lv1">${label}</span>${badge}
      </div>`;
    }
    return html`<div class="row">
      <span class="c1"></span>
      <span class="c2 ${n.last ? "end" : ""}"></span>
      <span class="c3"></span>
      <span class="node ${n.sel ? "sel" : ""}">${icon(n.i!)}<span>${label}</span></span>${badge}
    </div>`;
  }

  private renderCanvas() {
    return html`<svg class="canvas" viewBox="246 197 1120 480">
      <g stroke="#e00000" fill="none" shape-rendering="crispEdges">
        <path d="M247 220L445 568"></path>
        <path d="M246 581L640 556"></path>
        <path d="M980 529L1366 503"></path>
        <path d="M931 301L1366 408"></path>
      </g>
      <g stroke="#8a0000" fill="none" shape-rendering="crispEdges">
        <path d="M931 301L960 197"></path>
        <path d="M246 648L362 677"></path>
      </g>
      <g stroke="#0a7a0a" fill="none">
        <circle cx="259" cy="245" r="13"></circle>
        <circle cx="259" cy="581" r="13"></circle>
      </g>
      <g fill="#d8d8d8" font-family="Liberation Sans" font-size="15" font-weight="700" text-anchor="middle">
        <text x="259" y="250">C</text>
        <text x="259" y="586">4</text>
      </g>
      <g shape-rendering="crispEdges">
        <path d="M416 197H564L679.500 465 630 677H623z" fill="#005cb4"></path>
        <path d="M602 197H779L716 463z" fill="#005cb4"></path>
        <path d="M564 197H602L716 463 679.500 465z" fill="#0073e6"></path>
        <path d="M779 197H835L824 247 797 363 730.500 648 919 646 956 487 911 488 916 462H999L950 677H630L679.500 465 716 463z" fill="#004d9c"></path>
        <path d="M835 197H886L999 461 916 462 824 247z" fill="#0073e6"></path>
        <path d="M824 247L916 462 911 488 956 487 919 646 797 363z" fill="#005cb4"></path>
        <path d="M797 363L919 646 730.500 648z" fill="#0073e6"></path>
      </g>
      <path d="M300 626L306 596" stroke="#1a80f0" stroke-width="4"></path>
      <path d="M309 587L302 600 311 602z" fill="#1a80f0"></path>
      <path d="M300 626L336 624" stroke="#20e020" stroke-width="4"></path>
      <path d="M346 624L336 618 336 630z" fill="#20e020"></path>
      <path d="M300 627L313 648" stroke="#f01010" stroke-width="4"></path>
      <path d="M318 657L308 648 318 642z" fill="#f01010"></path>
      <g font-family="Liberation Sans" font-size="13">
        <text x="303" y="587" fill="#1a80f0">Z</text>
        <text x="339" y="637" fill="#20e020">Y</text>
        <text x="325" y="656" fill="#f01010">X</text>
      </g>
    </svg>`;
  }

  render() {
    return html`<div class="app">
      <div class="titlebar">
        ${icon("app")}
        <span>广联达BIM钢筋算量软件 GGJ2013 - [C:\\Users\\Administrator.PC-20141127NRHM\\Desktop\\白龙村-2017-06-12-10-02-47(2168版).GGJ12]</span>
        <div class="winbtns">
          <svg viewBox="0 0 45 21"><path d="M18 10.500h10" stroke="#111"></path></svg>
          <svg viewBox="0 0 45 21"><path d="M18 7.500h7v7h-7zM20.500 7.500v-2h7v7h-2.500" fill="none" stroke="#111"></path></svg>
          <svg viewBox="0 0 45 21"><path d="M17 5.500l10 10M27 5.500l-10 10" stroke="#111"></path></svg>
        </div>
      </div>

      <div class="menubar">
        ${["文件(F)", "编辑(E)", "楼层(L)", "构件(N)", "绘图(D)", "修改(M)", "钢筋量(Q)", "视图(V)", "工具(T)", "云应用(Y)", "BIM应用(I)", "在线服务(S)", "帮助(H)", "版本号(B)"].map(
          (m) => html`<span class="menu">${m}</span>`,
        )}
        <span class="menu ico">${icon("change")}新建变更<span class="arrow"></span></span>
        <span class="menu ico">${icon("xiaoer")}广小二</span>
        <div class="ticker">为什么筏板XY方向布置..</div>
        <span class="menu ico">${icon("avatar")}<span class="phone">13907298339</span><span class="arrow phone-arrow"></span></span>
        <span class="menu">造价豆:0</span>
        <span class="menu ico">${icon("bell")}</span>
        <span class="more menu-more">»</span>
      </div>

      <div class="row1">
        <div class="bar w150">${this.items(ROW_A)}<span class="more">»</span></div>
        <div class="bar w546">${this.items(ROW_B)}<span class="more">»</span></div>
        <div class="bar grow">${this.items(ROW_C)}<span class="more">»</span></div>
      </div>

      <div class="work">
        <aside class="nav">
          <div class="navhead">
            模块导航栏
            <svg class="pin" viewBox="0 0 10 11"><path d="M3 1h4v5H3zM1 6.500h8M5 7v4" stroke="#fff" fill="none"></path></svg>
            <svg class="x" viewBox="0 0 10 11"><path d="M1 1.500l8 8M9 1.500l-8 8" stroke="#fff" fill="none"></path></svg>
          </div>
          <div class="navbtn">工程设置</div>
          <div class="navbtn">绘图输入</div>
          <div class="treebar">
            <svg class="ic" viewBox="0 0 16 16"><path d="M4 1v8M0 5h8M10 6v10M5 11h11" stroke="#0c5a4a" stroke-width="2"></path></svg>
            <svg class="ic" viewBox="0 0 16 16"><path d="M0 5h8M5 11h11" stroke="#0c5a4a" stroke-width="2"></path></svg>
          </div>
          <div class="treebox">
            <div class="rows">${TREE.map((n) => this.renderNode(n))}</div>
            <div class="sb">
              <div class="top">
                <svg viewBox="0 0 15 12"><path d="M4 8l3.500-4L11 8" fill="none" stroke="#666" stroke-width="2"></path></svg>
              </div>
              <div class="thumb"></div>
              <div class="bot">
                <svg viewBox="0 0 15 12"><path d="M4 4l3.500 4L11 4" fill="none" stroke="#666" stroke-width="2"></path></svg>
              </div>
            </div>
          </div>
          <div class="navbtn tallgap">单构件输入</div>
          <div class="navbtn gapbtn">报表预览</div>
        </aside>

        <section class="main">
          <div class="bar offs">
            <div class="grip"></div>
            <div class="combo"><b>不偏移</b><u><span class="arrow"></span></u></div>
            <div class="sep"><i></i></div>
            <span class="w18 gray">X=</span>
            <div class="spin w57">0<em></em></div>
            <span class="w29">mm</span>
            <span class="w18 gray">Y=</span>
            <div class="spin w57">0<em></em></div>
            <span class="w29 w24">mm</span>
            <div class="sep"><i></i></div>
            <span class="cb"></span>
            <span class="rot">旋转</span>
            <div class="spin w67">0.000<em></em></div>
            <span class="gray deg">°</span>
          </div>
          <div class="cmdrow r2"><div class="bar">${this.items(ROW_EDIT)}</div></div>
          <div class="cmdrow r3">
            <div class="bar">${this.items(ROW_COMP)}</div>
            <div class="bar fade"><div class="grip"></div></div>
            <div class="bar far">${this.items(ROW_AUX)}</div>
          </div>
          <div class="cmdrow r4"><div class="bar">${this.items(ROW_DRAW)}</div></div>
          ${this.renderCanvas()}
          <div class="snaprow"><div class="bar">${this.items(ROW_SNAP)}</div></div>
        </section>
      </div>

      <div class="status">
        <div class="cell" style="width:148px"><span class="m">X=38332 Y=11841</span></div>
        <div class="cell" style="width:78px">层高<span class="m">:4.5m</span></div>
        <div class="cell" style="width:98px">底标高<span class="m">:-0.03m</span></div>
        <div class="cell" style="width:48px"><span class="m">1(1)</span></div>
        <div class="cell grow">按鼠标左键指定第一个角点，或拾取构件图元</div>
        <div class="cell" style="width:70px"><span class="m">724 FPS</span></div>
      </div>

      <footer class="taskbar">
        <div class="start">
          <svg viewBox="0 0 17 17"><path d="M0 2.500l7-1v6.500H0zM8 1.300L17 0v8H8zM0 9h7v6.500l-7-1zM8 9h9v8l-9-1.300z" fill="#fff"></path></svg>
        </div>
        <div class="search">
          <span class="ring"></span>
          <span>在这里输入你要搜索的内容</span>
          <svg viewBox="0 0 14 20"><rect x="4" y="1" width="6" height="11" rx="3" fill="none" stroke="#999"></rect><path d="M1.500 8c0 8 11 8 11 0M7 15v4M4 19h6" fill="none" stroke="#999"></path></svg>
        </div>
        <div class="tk">
          <svg viewBox="0 0 26 26"><path d="M12 12C6 12 2 9 3 5s8-4 9 2zM14 12c0-6 3-10 7-9s4 8-2 9zM14 14c6 0 10 3 9 7s-8 4-9-2zM12 14c0 6-3 10-7 9s-4-8 2-9z" fill="#e8e8e8"></path></svg>
        </div>
        <div class="tk">
          <svg viewBox="0 0 26 26">
            <path d="M13 3a10 10 0 1 0 8 16M13 8a6 6 0 1 0 5 8M13 12a3 3 0 1 0 3 3" fill="none" stroke="#ddd" stroke-width="1.400"></path>
            <path d="M19 2c3 0 4 2 4 5l2 4H14l2-4c0-3 1-5 3-5z" fill="#e8a820"></path>
          </svg>
        </div>
        <div class="tk gap5">
          <svg viewBox="0 0 26 26"><path d="M13 3C6 3 3 9 3 14c0 7 6 10 11 10 4 0 7-1 8-2v-5c-2 2-5 3-8 3-3 0-5-2-5-4h14c1-8-3-13-10-13zm-4 9c0-3 2-5 5-5s4 2 4 5z" fill="#1e90e8"></path></svg>
        </div>
        <div class="tk">
          <svg viewBox="0 0 26 26"><path d="M4 8h18v17H4z" fill="#fff"></path><path d="M9 8c0-8 8-8 8 0" fill="none" stroke="#fff" stroke-width="1.500"></path><path d="M9 12h3.500v3.500H9zM13.500 12H17v3.500h-3.500zM9 16.500h3.500V20H9zM13.500 16.500H17V20h-3.500z" fill="#222"></path></svg>
        </div>
        <div class="tk">
          <svg viewBox="0 0 26 26"><path d="M2 4h9l2 3h11v17H2z" fill="#f6d67c"></path><path d="M9 15l4-3 4 3v6H9z" fill="#3aa0e0"></path><path d="M2 8h22" stroke="#e8b840"></path></svg>
        </div>
        <div class="tk run">
          <svg viewBox="0 0 26 26"><path d="M13 2c-6 0-10 5-9 11 1 7 7 11 13 9l1-4-6-8 2-4 8-1c-2-2-5-3-9-3z" fill="#2a78d0"></path><path d="M8 15l8-7 3 3-8 8z" fill="#e84050"></path><path d="M13 5c4-2 7-1 9 1-3 0-6 1-8 3z" fill="#e8e8e8"></path></svg>
        </div>
        <div class="tk run">
          <svg viewBox="0 0 26 26"><circle cx="13" cy="14" r="11" fill="#e8f4e0" stroke="#60a830"></circle><circle cx="13" cy="14" r="8" fill="#58c040"></circle><path d="M8 14h10M9 10c3-2 6-2 8 0M9 18c3 2 6 2 8 0" stroke="#fff" stroke-width="1.800" fill="none"></path><path d="M18 3c3 0 5 2 5 4" stroke="#2a8a30" fill="none" stroke-width="1.500"></path></svg>
        </div>
        <div class="tk run act"><svg viewBox="0 0 16 16">${ICONS.app}</svg></div>
        <div class="tk run">
          <svg viewBox="0 0 26 26"><rect width="26" height="26" rx="3" fill="#f0a020"></rect><path d="M6 6l12 3-3 13-12-3z" fill="#fdf6e0" stroke="#a87020"></path><path d="M7 11l7 2M6 14l7 2M5 17l6 1" stroke="#a87020"></path><path d="M15 16L22 3l2 1-7 13z" fill="#c84020"></path></svg>
        </div>
        <div class="tray">
          <div class="cpu">45%<br />CPU使用</div>
          <div class="tr w24t lead"><svg viewBox="0 0 18 16"><path d="M3 11l6-6 6 6" fill="none" stroke="#fff" stroke-width="1.300"></path></svg></div>
          <div class="tr w24t"><svg viewBox="0 0 18 16"><rect x="4" y="4" width="13" height="9" fill="none" stroke="#fff"></rect><rect x="5" y="5" width="11" height="7" fill="#fff"></rect><path d="M1 1l3 3" stroke="#fff"></path></svg></div>
          <div class="tr w25t"><svg viewBox="0 0 18 16"><path d="M2 14a10 10 0 0 1 12-11M5 14a7 7 0 0 1 8-8M8 14a4 4 0 0 1 4-4" fill="none" stroke="#ccc" stroke-dasharray="1.500 .7"></path><circle cx="13" cy="13" r="1.500" fill="#fff"></circle></svg></div>
          <div class="tr zh">中</div>
          <div class="tr w38t"><div class="slogo tray-s">S</div></div>
          <div class="clock">11:48<br />2017/6/14</div>
          <div class="notif">
            <svg class="ic" viewBox="0 0 16 16"><path d="M1 0h14v12H6l-3 3v-3H1z" fill="#fff"></path><path d="M3.500 3.500h9M3.500 6h9M3.500 8.500h9" stroke="#333"></path></svg>
            <b>6</b>
          </div>
        </div>
      </footer>

      <div class="ime">
        <div class="slogo">S</div>
        <div class="imebar">
          <span>中</span>
          <svg viewBox="0 0 17 17"><circle cx="5" cy="6" r="2" fill="none" stroke="#1a78c8"></circle><path d="M12 9c1 2 0 4-2 5" fill="none" stroke="#1a78c8" stroke-width="2"></path></svg>
          <svg viewBox="0 0 17 17"><rect x="5.500" y="1" width="6" height="10" rx="3" fill="#1a78c8"></rect><path d="M3 8c0 7 11 7 11 0M8.500 13v3" fill="none" stroke="#1a78c8" stroke-width="1.300"></path></svg>
          <svg viewBox="0 0 17 17"><rect x="0.500" y="3" width="16" height="11" rx="2" fill="#1a78c8"></rect><path d="M3 6h11M3 8.500h11M5 11h7" stroke="#fff" stroke-dasharray="1.500 1"></path></svg>
          <svg viewBox="0 0 17 17"><circle cx="6" cy="5" r="3" fill="#b8bcc0"></circle><path d="M1 15c0-4 2-6 5-6s5 2 5 6z" fill="#b8bcc0"></path><rect x="9" y="9" width="7" height="6" fill="#d8dce0"></rect></svg>
          <svg viewBox="0 0 17 17"><path d="M5 1l3 2 3-2 5 3-2 4h-2v8H5V8H3L1 4z" fill="#1a78c8"></path></svg>
          <svg viewBox="0 0 17 17"><path d="M15 2c-3-2-6 0-6 3 0 1 0 1 .5 2L2 13c-1 2 1 3 2.500 2.500L11 8c3 1 5-1 5-4l-3 2-2-1V3z" fill="#1a78c8"></path></svg>
        </div>
      </div>
      <div class="orb">72</div>

      <svg width="0" height="0" style="position:absolute">
        <defs><linearGradient id="fg" x1="0" y1="0" x2="0" y2="1"><stop offset="0" stop-color="#fff0b8"></stop><stop offset="1" stop-color="#e8b030"></stop></linearGradient></defs>
      </svg>
    </div>`;
  }
}
